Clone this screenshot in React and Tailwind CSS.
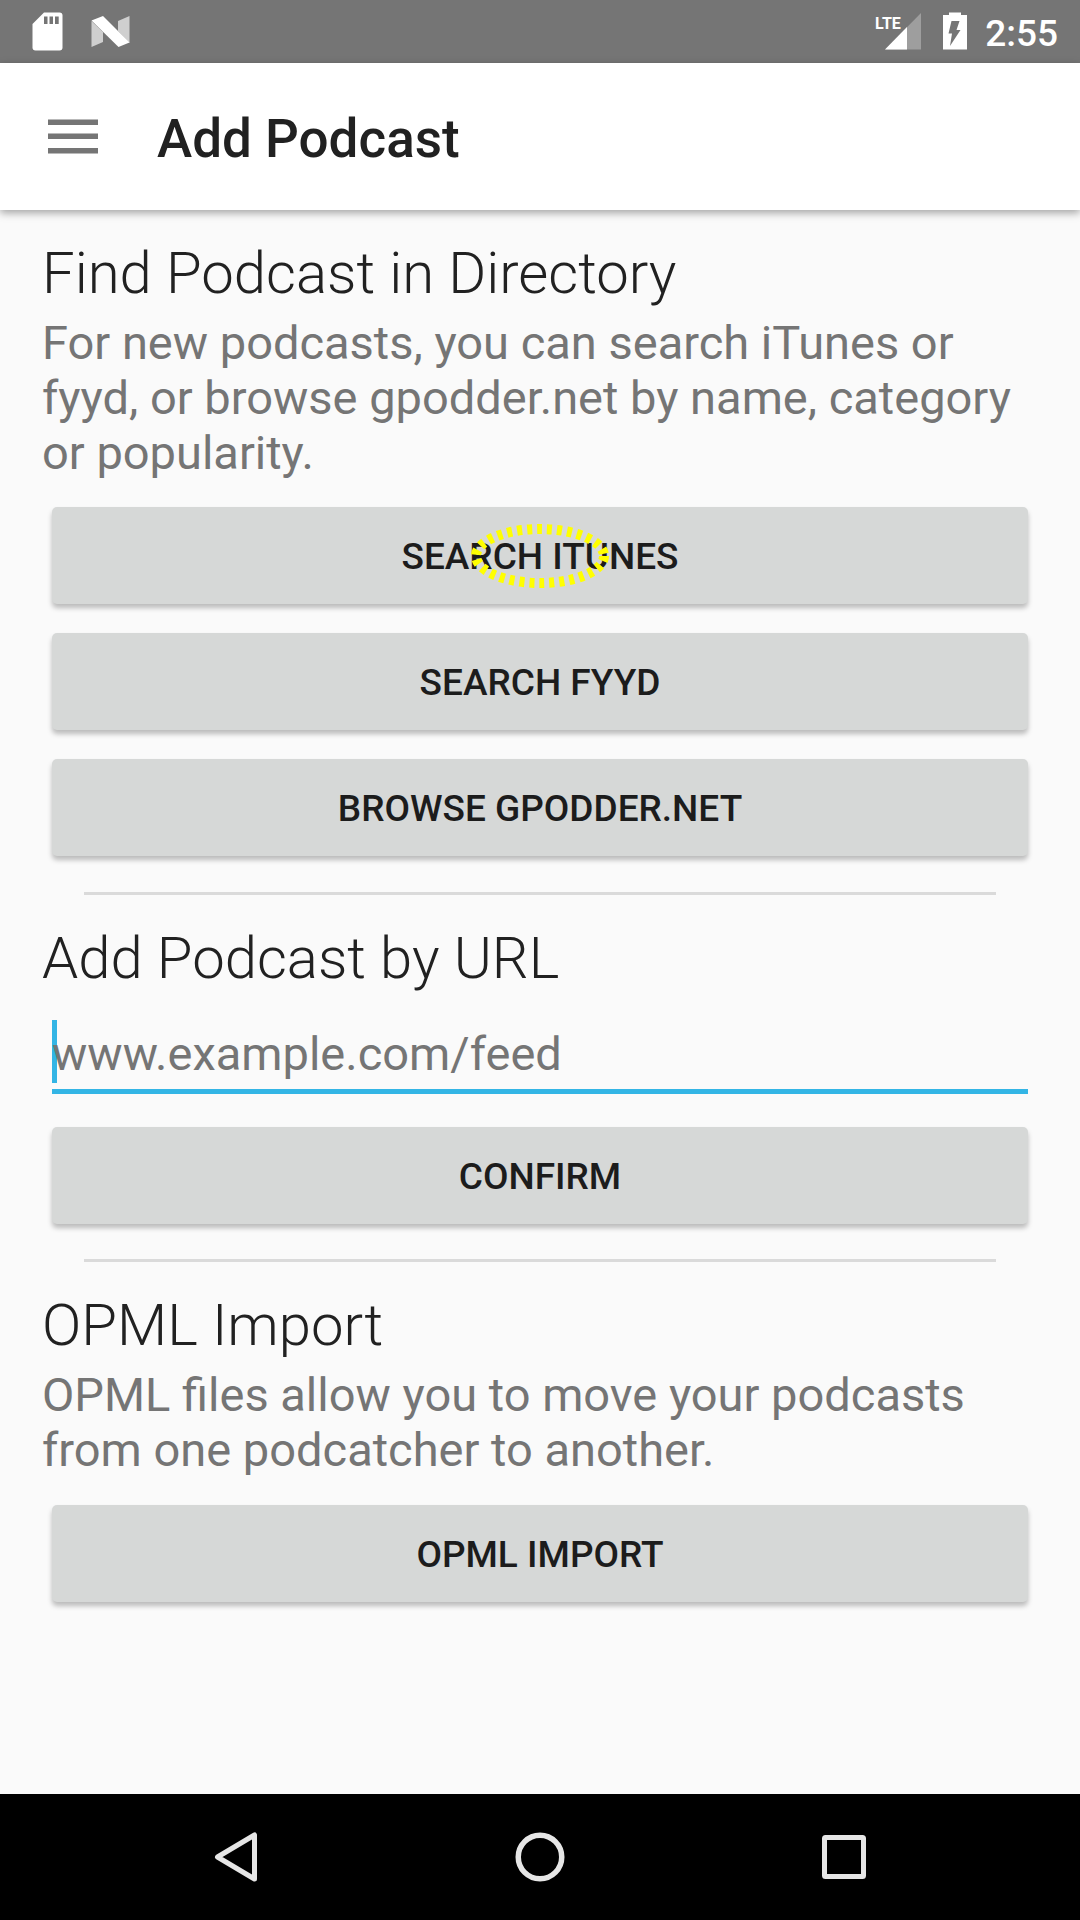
function StatusBar() {
  return (
    <div className="flex h-[63px] shrink-0 items-center bg-[#757575] pr-[22px] pl-5 text-white">
      <svg className="h-[63px] w-[120px]" viewBox="20 0 120 63" role="img" aria-label="Notifications">
        <path d="M44 12.500H59.500Q62.500 12.500 62.500 15.500V47.500Q62.500 50.500 59.500 50.500H35.500Q32.500 50.500 32.500 47.500V24Z" fill="#fff" />
        <path d="M44 16.500h3.500v7.500H44zM49.500 16.500H53v7.500h-3.500zM55 16.500h3.700v7.500H55z" fill="#757575" />
        <path d="M91.500 21 103 32V42L91.500 47ZM118 21 129.500 16V43L118 31Z" fill="#cfcfcf" />
        <path d="M91.500 20.500 103 16 129.500 42.500 118.500 47Z" fill="#fff" />
      </svg>
      <div className="flex-1" />
      <svg className="h-[63px] w-[100px]" viewBox="873 0 100 63" role="img" aria-label="LTE signal, battery charging">
        <text x="875" y="29" fontFamily="'Liberation Sans Narrow', Roboto, sans-serif" fontSize="16" fontWeight="700" fill="#fff">LTE</text>
        <path d="M921 13V49.500H885Z" fill="#9e9e9e" />
        <path d="M907 27V49.500H885Z" fill="#fff" />
        <path d="M949 12.500h12V15h6V49.500H943V15h6Z" fill="#fff" />
        <path d="M951.500 21h8l-3 9h4l-10.500 16 2-12.500h-3.500Z" fill="#757575" />
      </svg>
      <span className="ml-3 pt-1 text-[37px] leading-[44px] font-medium">2:55</span>
    </div>
  );
}

function AppBar() {
  return (
    <header className="relative flex h-[147px] shrink-0 items-center bg-white px-12 shadow-[0_3px_8px_rgba(0,0,0,0.35)]">
      <button type="button" aria-label="Open menu" className="flex h-[50px] w-[50px] items-center justify-center">
        <svg className="h-[36px] w-[50px]" viewBox="0 0 50 36" fill="#757575">
          <path d="M0 0.500h50v5.500H0zM0 14.500h50v5.500H0zM0 29h50v5.500H0z" />
        </svg>
      </button>
      <h1 className="ml-[59px] pt-1 text-[53px] leading-[60px] font-medium">Add Podcast</h1>
    </header>
  );
}

function ActionButton({ children }) {
  return (
    <button
      type="button"
      className="relative flex h-[97px] w-full items-center justify-center rounded-[5px] bg-[#d6d8d7] pt-[3px] text-[37px] leading-[44px] font-medium text-[#1c1c1c] uppercase shadow-[0_4px_5px_rgba(0,0,0,0.25)]"
    >
      {children}
    </button>
  );
}

function Heading({ children }) {
  return <h2 className="text-[58px] leading-[68px] font-light">{children}</h2>;
}

function Divider() {
  return <hr className="mx-[42px] border-0 border-t-[3px] border-[#dadada]" />;
}

export default function App() {
  return (
    <div className="flex min-h-screen flex-col bg-[#fafafa] font-[Roboto,sans-serif] text-[#212121]">
      <StatusBar />
      <AppBar />
      <main className="flex-1 px-[42px] pt-[29px]">
        <section>
          <Heading>Find Podcast in Directory</Heading>
          <p className="mt-2 text-[47px] leading-[55px] text-[#757575]">
            For new podcasts, you can search iTunes or fyyd, or browse gpodder.net by name, category or popularity.
          </p>
          <div className="mt-[27px] flex flex-col gap-[29px] px-[10px]">
            <ActionButton>
              Search iTunes
              <svg className="absolute top-1/2 left-1/2 h-[66px] w-[140px] -translate-x-1/2 -translate-y-1/2" viewBox="0 0 140 66" aria-hidden="true">
                <ellipse cx="70" cy="33" rx="64" ry="27" fill="none" stroke="#ff0" strokeWidth="10" strokeDasharray="5 5" />
              </svg>
            </ActionButton>
            <ActionButton>Search fyyd</ActionButton>
            <ActionButton>Browse gpodder.net</ActionButton>
          </div>
        </section>
        <div className="mt-9">
          <Divider />
        </div>
        <section className="mt-[29px]">
          <Heading>
            <label htmlFor="feed">Add Podcast by URL</label>
          </Heading>
          <div className="px-[10px]">
            <div className="relative mt-[28px] border-b-[5px] border-[#33b5e5] pb-[6px]">
              <span className="absolute top-0 left-0 h-[63px] w-[5px] bg-[#33b5e5]" aria-hidden="true" />
              <input
                id="feed"
                type="url"
                placeholder="www.example.com/feed"
                className="relative block h-[63px] w-full bg-transparent pt-1 text-[47px] leading-[55px] outline-none placeholder:text-[#757575] placeholder:opacity-100"
              />
            </div>
            <div className="mt-[33px]">
              <ActionButton>Confirm</ActionButton>
            </div>
          </div>
        </section>
        <div className="mt-[35px]">
          <Divider />
        </div>
        <section className="mt-[29px]">
          <Heading>OPML Import</Heading>
          <p className="mt-2 text-[47px] leading-[55px] text-[#757575]">
            OPML files allow you to move your podcasts from one podcatcher to another.
          </p>
          <div className="mt-[28px] px-[10px]">
            <ActionButton>OPML import</ActionButton>
          </div>
        </section>
      </main>
      <nav className="flex h-[126px] shrink-0 items-center justify-center gap-[234px] bg-black">
        <button type="button" aria-label="Back">
          <svg className="h-[70px] w-[70px]" viewBox="0 0 70 70" fill="none" stroke="#e6e6e6" strokeWidth="5" strokeLinejoin="round">
            <path d="M53.500 13V57L16.500 35Z" />
          </svg>
        </button>
        <button type="button" aria-label="Home">
          <svg className="h-[70px] w-[70px]" viewBox="0 0 70 70" fill="none" stroke="#e6e6e6" strokeWidth="5.500">
            <circle cx="35" cy="35" r="21.750" />
          </svg>
        </button>
        <button type="button" aria-label="Recent apps">
          <svg className="h-[70px] w-[70px]" viewBox="0 0 70 70" fill="none" stroke="#e6e6e6" strokeWidth="5" strokeLinejoin="round">
            <rect x="15.500" y="15.500" width="39" height="39" rx="1" />
          </svg>
        </button>
      </nav>
    </div>
  );
}
